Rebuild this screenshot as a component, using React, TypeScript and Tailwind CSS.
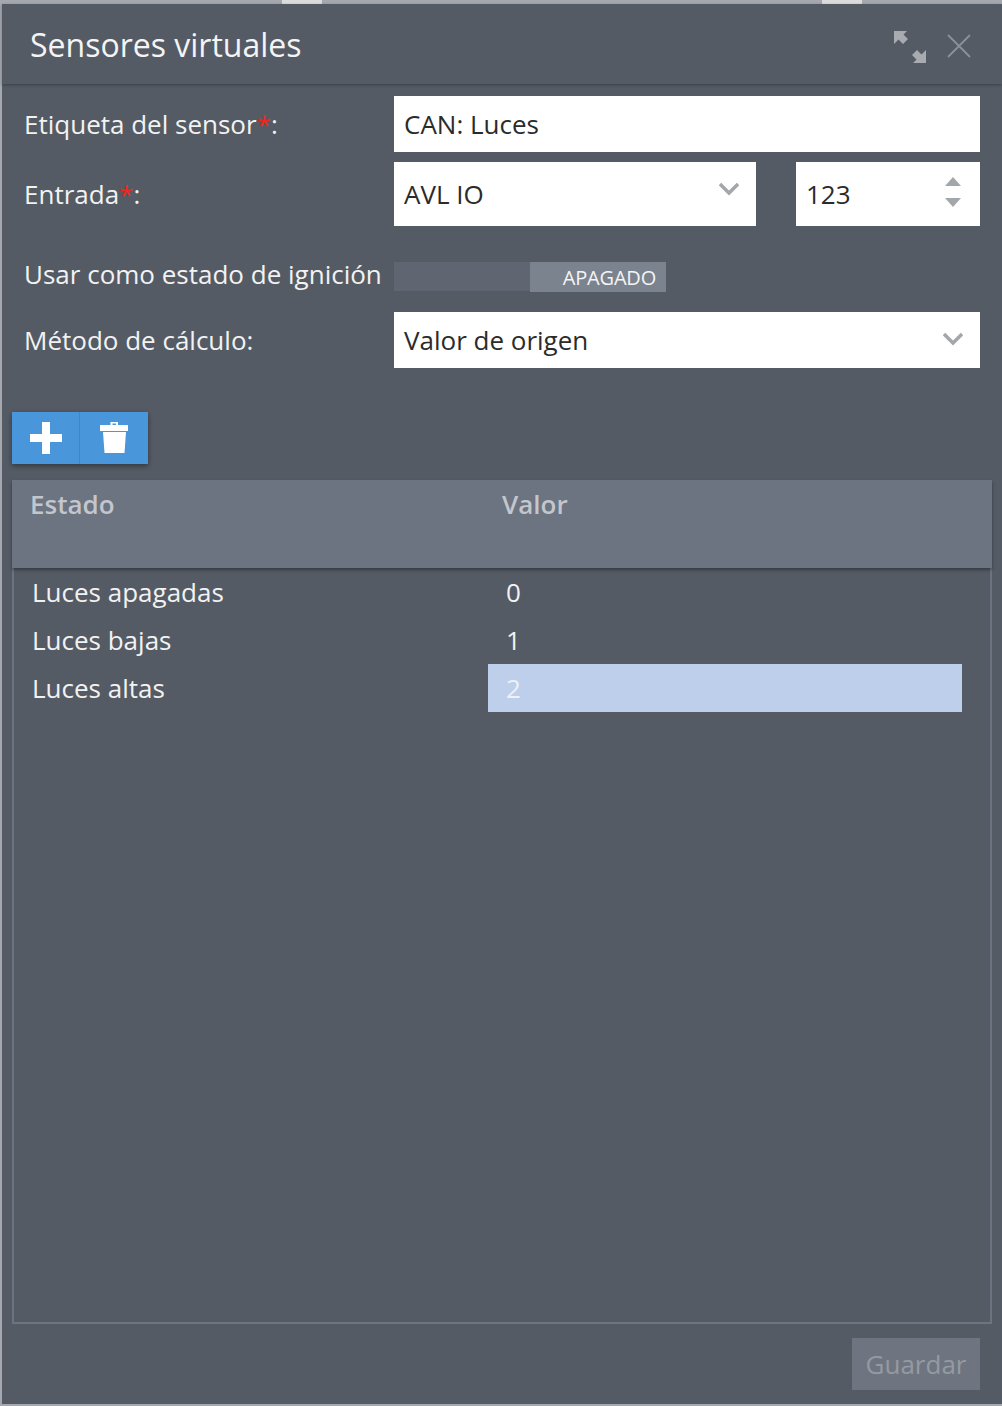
import React from "react";

function Chevron() {
  return (
    <svg width="20" height="14" viewBox="0 0 20 14" className="text-[#a3a6ab]">
      <path d="M1 2 L10 11 L19 2" fill="none" stroke="currentColor" strokeWidth="3.4" />
    </svg>
  );
}

function Req() {
  return <span className="text-[#e8291c]">*</span>;
}

function Row({ label, className, children }: { label: React.ReactNode; className: string; children: React.ReactNode }) {
  return (
    <div className={`flex items-center ${className}`}>
      <div className="w-[370px] shrink-0 text-[26px] leading-[36px] text-[#f2f2f2]">{label}</div>
      {children}
    </div>
  );
}

function TableRow({ name, value, selected }: { name: string; value: string; selected?: boolean }) {
  return (
    <div className="flex h-12 items-center">
      <div className="w-[474px] shrink-0 pl-[18px] text-[26px] text-[#f2f2f2]">{name}</div>
      <div className={`h-12 w-[474px] pl-[18px] text-[26px] leading-[48px] ${selected ? "bg-[#bdcfeb] text-[#eef1f6]" : "text-[#f2f2f2]"}`}>{value}</div>
    </div>
  );
}

export default function App() {
  return (
    <div className="flex h-[1406px] w-[1002px] flex-col overflow-hidden bg-[#a5a9af] font-['Open_Sans',sans-serif]">
      <div className="flex h-1 shrink-0">
        <div className="w-[282px]" />
        <div className="w-10 bg-[#dcdcdc]" />
        <div className="w-[500px]" />
        <div className="w-10 bg-[#dcdcdc]" />
      </div>
      <div className="ml-[2px] mb-[2px] flex min-h-0 flex-1 flex-col bg-[#545b65]">
        <header className="relative flex h-20 shrink-0 items-center justify-between pl-7 pr-[31px] shadow-[0_1px_3px_rgba(0,0,0,0.3)]">
          <h1 className="mt-[2px] text-[32px] font-normal leading-none text-[#f4f4f4]">Sensores virtuales</h1>
          <div className="flex items-center gap-[21px]">
            <svg className="mt-[6px]" width="32" height="32" viewBox="0 0 32 32" fill="#a8abb0">
              <path d="M0 0 H13 L9.5 3.5 L14 8 L9 13 L4.5 8.5 L0 13 Z" />
              <path d="M32 32 H19 L22.5 28.5 L18 24 L23 19 L27.5 23.5 L32 19 Z" />
            </svg>
            <svg className="mt-[3px]" width="24" height="24" viewBox="0 0 24 24">
              <path d="M1 1 L23 23 M23 1 L1 23" stroke="#8b9098" strokeWidth="1.8" fill="none" />
            </svg>
          </div>
        </header>

        <div className="flex min-h-0 flex-1 flex-col">
          <div className="pl-[22px] pr-[22px] pt-3">
            <Row label={<>Etiqueta del sensor<Req />:</>} className="h-14">
              <div className="flex h-14 flex-1 items-center bg-white pl-[10px] text-[26px] text-[#2b2b2b]">CAN: Luces</div>
            </Row>
            <Row label={<>Entrada<Req />:</>} className="mt-[10px] h-16">
              <div className="flex h-16 w-[362px] items-center justify-between bg-white pl-[10px] pr-[17px] text-[26px] text-[#2b2b2b]">
                <span>AVL IO</span>
                <span className="mb-[10px]"><Chevron /></span>
              </div>
              <div className="ml-10 flex h-16 flex-1 items-center justify-between bg-white pl-[10px] pr-[19px] text-[26px] text-[#2b2b2b]">
                <span>123</span>
                <svg className="mb-1" width="16" height="30" viewBox="0 0 16 30" fill="#a3a6ab">
                  <path d="M8 0 L16 9 H0 Z" />
                  <path d="M8 30 L16 21 H0 Z" />
                </svg>
              </div>
            </Row>
            <Row label={<span className="mb-[6px] block">Usar como estado de ignición</span>} className="mt-9 h-[30px]">
              <div className="flex h-[30px] w-[272px]">
                <div className="h-[29px] w-[136px] bg-[#5f6672]" />
                <div className="flex w-[136px] items-center justify-end bg-[#7b838f] pr-[10px] pt-[2px] text-[20px] tracking-[-0.2px] text-[#f4f4f4]">APAGADO</div>
              </div>
            </Row>
            <Row label="Método de cálculo:" className="mt-5 h-14">
              <div className="flex h-14 flex-1 items-center justify-between bg-white pl-[10px] pr-[17px] text-[26px] text-[#2b2b2b]">
                <span>Valor de origen</span>
                <span className="mb-[2px]"><Chevron /></span>
              </div>
            </Row>
          </div>

          <div className="mt-11 ml-[10px] flex h-[52px] w-[136px] bg-[#4a96da] shadow-[0_2px_5px_rgba(0,0,0,0.4)]">
            <div className="flex w-[68px] items-center justify-center border-r border-[#4287c5]">
              <svg width="32" height="32" viewBox="0 0 32 32" fill="#fff">
                <path d="M12 0 H20 V12 H32 V20 H20 V32 H12 V20 H0 V12 H12 Z" />
              </svg>
            </div>
            <div className="flex flex-1 items-center justify-center">
              <svg width="28" height="32" viewBox="0 0 28 32" fill="#fff">
                <path d="M10.5 0 H18 V3 H28 V9 H0 V3 H10.5 Z M12.5 1.5 V3 H16 V1.5 Z" fillRule="evenodd" />
                <path d="M3 10 H26 L24.5 31 H4.5 Z" />
              </svg>
            </div>
          </div>

          <div className="mt-4 ml-[10px] flex min-h-0 w-[980px] flex-1 flex-col">
            <div className="relative h-[88px] shrink-0 bg-[#6c7381] shadow-[0_2px_3px_rgba(0,0,0,0.35)]">
              <div className="flex pt-[6px] text-[26px] font-semibold leading-[36px] text-[#c3c6cc]">
                <div className="w-[490px] pl-[18px]">Estado</div>
                <div>Valor</div>
              </div>
            </div>
            <div className="h-[756px] w-[980px] border-x-2 border-b-2 border-[#6c7381]">
              <TableRow name="Luces apagadas" value="0" />
              <TableRow name="Luces bajas" value="1" />
              <TableRow name="Luces altas" value="2" selected />
            </div>
          </div>

          <div className="my-[14px] flex justify-end pr-[22px]">
            <div className="flex h-[52px] w-32 items-center justify-center bg-[#6e7580] text-[26px] text-[#959aa2]">Guardar</div>
          </div>
        </div>
      </div>
    </div>
  );
}
